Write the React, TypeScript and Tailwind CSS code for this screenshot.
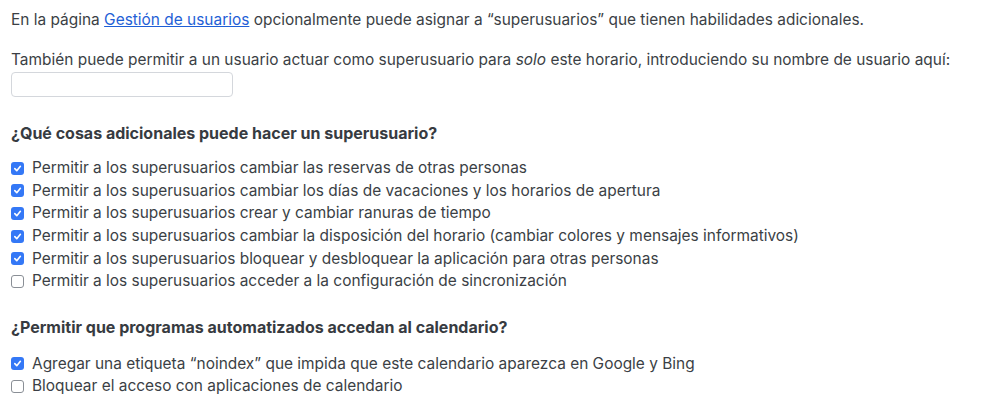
import React from 'react';

const superOptions = [
  { label: 'Permitir a los superusuarios cambiar las reservas de otras personas', checked: true },
  { label: 'Permitir a los superusuarios cambiar los días de vacaciones y los horarios de apertura', checked: true },
  { label: 'Permitir a los superusuarios crear y cambiar ranuras de tiempo', checked: true },
  { label: 'Permitir a los superusuarios cambiar la disposición del horario (cambiar colores y mensajes informativos)', checked: true },
  { label: 'Permitir a los superusuarios bloquear y desbloquear la aplicación para otras personas', checked: true },
  { label: 'Permitir a los superusuarios acceder a la configuración de sincronización', checked: false },
];

const botOptions = [
  { label: 'Agregar una etiqueta “noindex” que impida que este calendario aparezca en Google y Bing', checked: true },
  { label: 'Bloquear el acceso con aplicaciones de calendario', checked: false },
];

function Check({ label, checked }: { label: string; checked: boolean }) {
  return (
    <label className="flex items-center h-[22.6px]">
      {checked ? (
        <span className="w-[13px] h-[13px] rounded-[3px] bg-[#3478f6] flex items-center justify-center mr-[8px] shrink-0">
          <svg width="9" height="9" viewBox="0 0 10 10" fill="none">
            <path d="M2 5.2 L4.2 7.4 L8.2 2.6" stroke="white" strokeWidth="1.8" strokeLinecap="round" strokeLinejoin="round" />
          </svg>
        </span>
      ) : (
        <span className="w-[13px] h-[13px] rounded-[3px] border border-[#8a8f96] bg-white mr-[8px] shrink-0" />
      )}
      <span>{label}</span>
    </label>
  );
}

export default function App() {
  return (
    <div className="bg-white w-[984px] h-[408px] px-[11px] pt-[10px] text-[15.45px] text-[#3b3f45] leading-[20px]" style={{ fontFamily: 'Inter, "Liberation Sans", sans-serif' }}>
      <p>
        En la página <a href="#" className="text-[#1f5fd6] underline">Gestión de usuarios</a> opcionalmente puede asignar a “superusuarios” que tienen habilidades adicionales.
      </p>

      <p className="mt-[20px]">
        También puede permitir a un usuario actuar como superusuario para <em>solo</em> este horario, introduciendo su nombre de usuario aquí:
      </p>
      <input type="text" className="mt-[2px] block w-[222px] h-[25px] border border-[#d4d7dc] rounded-[4px] bg-white" />

      {/* superusers */}
      <h3 className="font-bold mt-[26px] text-[16px] text-[#373b41]">¿Qué cosas adicionales puede hacer un superusuario?</h3>
      <div className="mt-[14px]">
        {superOptions.map((o, i) => (
          <Check key={i} label={o.label} checked={o.checked} />
        ))}
      </div>

      {/* bots */}
      <h3 className="font-bold mt-[24px] text-[16px] text-[#373b41]">¿Permitir que programas automatizados accedan al calendario?</h3>
      <div className="mt-[16px]">
        {botOptions.map((o, i) => (
          <Check key={i} label={o.label} checked={o.checked} />
        ))}
      </div>
    </div>
  );
}
